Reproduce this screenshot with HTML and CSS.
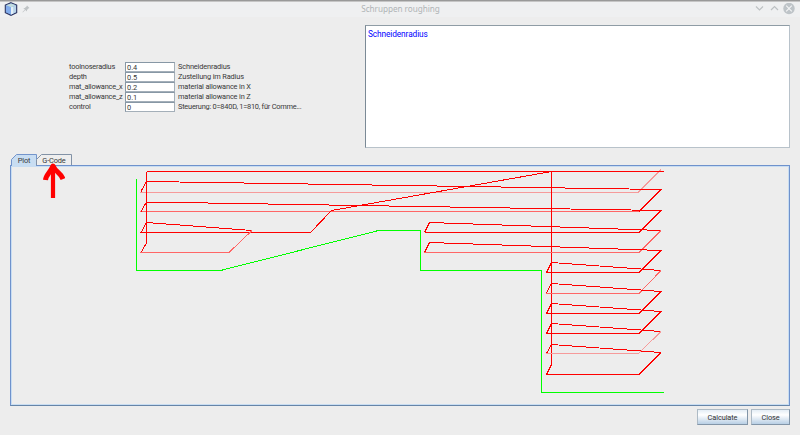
FILE: index.html
```html
<!DOCTYPE html>
<html lang="de">
<head>
<meta charset="utf-8">
<title>Schruppen roughing</title>
<link rel="stylesheet" href="styles.css">
</head>
<body>
<div class="window">
  <header class="titlebar">
    <svg class="app" width="14" height="14" viewBox="0 0 14 14"><path d="M7 .7 12.7 3v7.6L7 13.3 1.3 10.6V3z" fill="#7aa4dc" stroke="#303864" stroke-width="1.1"/><path d="M2 3.5 7 5.2v7.2L2 10.2z" fill="#82acec"/><path d="M7 5.2 12 3.5v6.7L7 12.4z" fill="#b9d4e8"/><path d="M7 5.2 9.2 4.5v7L7 12.4z" fill="#e4f0f8"/><path d="M7 1.5 11.8 3.3 7 5.2 2.2 3.3z" fill="#c2dce0"/></svg>
    <svg class="pin" width="8" height="8" viewBox="0 0 8 8"><path d="M5 .5 7.5 3 6.4 3.5 5 5v1.4L3.3 4.9.8 7.4.5 7l2.4-2.5L1.3 3h1.5L4.5 1.5z" fill="#bfc3c5"/></svg>
    <h1>Schruppen roughing</h1>
    <svg class="controls" width="42" height="12" viewBox="0 0 42 12" fill="none" stroke="#bdc1c3" stroke-width="1.2"><path d="m2 3.5 3.5 3.5L9 3.5M17 7l3.5-3.5L24 7"/><circle cx="35" cy="5.5" r="5.7" fill="#bec4c8" stroke="none"/><path d="m32.2 2.7 5.6 5.6m0-5.6-5.6 5.6" stroke="#f4f5f6" stroke-width="1.1"/></svg>
  </header>
  <main>
    <section class="top">
      <form class="fields">
        <label>toolnoseradius</label><span class="input">0.4</span><span class="desc">Schneidenradius</span>
        <label>depth</label><span class="input">0.5</span><span class="desc">Zustellung im Radius</span>
        <label>mat_allowance_x</label><span class="input">0.2</span><span class="desc">material allowance in X</span>
        <label>mat_allowance_z</label><span class="input">0.1</span><span class="desc">material allowance in Z</span>
        <label>control</label><span class="input">0</span><span class="desc steuerung">Steuerung: 0=840D, 1=810, für Comme...</span>
      </form>
      <div class="help"><span>Schneidenradius</span></div>
    </section>
    <nav class="tabs"><div class="tab active"><svg class="edge" width="26" height="12" viewBox="0 0 26 12"><path d="M.5 12V5.5L5.5.5H25.5V12" fill="#c8ddf2" stroke="#7394cb"/></svg><span>Plot</span></div><div class="tab code"><svg class="edge" width="36" height="12" viewBox="0 0 36 12"><path d="M.5 11V5.5L5.5.5H35.5V11" fill="#eee" stroke="#8292a6"/></svg><span>G-Code</span>
      <svg class="arrow" width="24" height="38" viewBox="0 0 24 38" fill="none" stroke="#f00" stroke-linejoin="round"><path d="M12 37V5" stroke-width="4.2"/><path d="M4.5 19C5 13.5 9.5 11.5 12 5 14.5 11 19.5 11.5 22 18" stroke-width="5"/></svg>
    </div></nav>
    <section class="plot">
      <svg width="776" height="236" viewBox="12 167 776 236" fill="none" stroke-width="1" shape-rendering="crispEdges">
        <g class="cut">
          <path class="faint" d="M140 192H638.5L661 169.5"/>
          <path class="light" d="M140 211.5H639"/>
          <path d="M146.5 171.5H663.5M551.5 171.5V364.5L546.5 374.5H639L661 352.5M146.5 171.5V243L141 252.5"/>
          <path d="M141 191.5 146.5 181.5 661 189.5 639 211.5M141 211.5 146.5 202 661 210.5 639 232.5"/>
          <path d="M140 232.5H310.5L331.5 210.5 551.5 171.5M141 232.5 146.5 222.5 252 230.5M424.5 232.5H639M424.5 232.5 429.5 222.5 661 230.5"/>
          <path class="light" d="M252 230.5 229 252.5H140M424 252.5H639L661 230.5"/>
          <path d="M424.5 252.5 429.5 242.5 661 250.5 639 272.5H546.5L551.5 262.5 661 270.5"/>
          <path class="light" d="M661 270.5 639 293.5H546"/>
          <path d="M546.5 293 551.5 283.5 661 291.5 639 313.5H546.5L551.5 303.5 661 311.5 639 333.5H546.5L551.5 323.5 661 331.5"/>
          <path class="faint" d="M661 331.5 638.5 353.5H546"/>
          <path d="M546.5 353.5 551.5 344.5 661 352.5"/>
        </g>
        <path class="contour" d="M136.5 179V270.5H220.5L378.5 230.5H420.5V270.5H541.5V392.5H663.5"/>
      </svg>
    </section>
    <footer><button class="calc">Calculate</button><button class="close">Close</button></footer>
  </main>
</div>
</body>
</html>
```
FILE: styles.css
```css
* { box-sizing: border-box; }
body { margin: 0; background: #ededed; color: #383838; font: 7.4px/10px Roboto, sans-serif; letter-spacing: -.15px; }
.window { width: 800px; height: 435px; border-top: 1px solid #999; overflow: hidden; }
.titlebar { height: 16px; display: flex; align-items: center; background: #eff0f1; padding: 0 4px 1px; border-top: 1px solid #c5c5c5; }
.pin { margin-left: 4px; }
h1 { flex: 1; margin: 0; padding-left: 17px; text-align: center; font: 8.2px/14px "Noto Sans", sans-serif; letter-spacing: -.05px; color: #b0b4b6; }
main { padding: 8px 10px 0; }
.top { height: 128px; display: flex; }
.fields { width: 355px; margin: 0; padding: 37px 0 0 59px; display: grid; grid-template-columns: 55px 50px 1fr; grid-auto-rows: 10px; column-gap: 1px; align-content: start; }
.fields label, .desc { white-space: nowrap; line-height: 10px; }
.fields label { letter-spacing: -.2px; }
.input { height: 10px; background: #fff; border: 1px solid #a4afb9; border-top-color: #8797a5; border-left-color: #8797a5; padding-left: 1px; line-height: 10px; letter-spacing: 0; }
.desc { padding-left: 2px; }
.steuerung { letter-spacing: -.23px; }
.help { width: 425px; height: 123px; background: #fff; border: 1px solid #b8c2ca; border-top-color: #8f9ca5; border-left-color: #7b8a96; padding: 4px 2px; color: #00f; font-size: 8.3px; line-height: 9px; letter-spacing: -.1px; }
.tabs { display: flex; height: 11px; padding-left: 1px; margin-top: 1px; position: relative; z-index: 1; }
.tab { position: relative; height: 12px; line-height: 13px; text-align: center; }
.tab span { position: relative; }
.edge { position: absolute; left: 0; top: 0; }
.active { width: 26px; }
.code { width: 36px; margin-left: -1px; }
.arrow { position: absolute; left: 5px; top: 7px; }
.plot { height: 241px; border: 1px solid #6f92cc; border-bottom-color: #6685a8; box-shadow: inset 0 0 0 1px #c8ddf2; padding: 1px; }
.plot > svg { display: block; }
.cut { stroke: #f00; }
.light { stroke: #f66; }
.faint { stroke: #f69a9a; }
.contour { stroke: #0f0; }
footer { display: flex; justify-content: flex-end; gap: 3px; padding-top: 3px; }
button { height: 16px; padding: 0; border: 1px solid #adbac5; border-right-color: #8295a8; border-bottom-color: #8295a8; background: linear-gradient(#e4edf5, #fff 35%, #b8cfe5); color: #333; font: 7.4px Roboto, sans-serif; letter-spacing: -.1px; }
.calc { width: 51px; }
.close { width: 39px; }
```
